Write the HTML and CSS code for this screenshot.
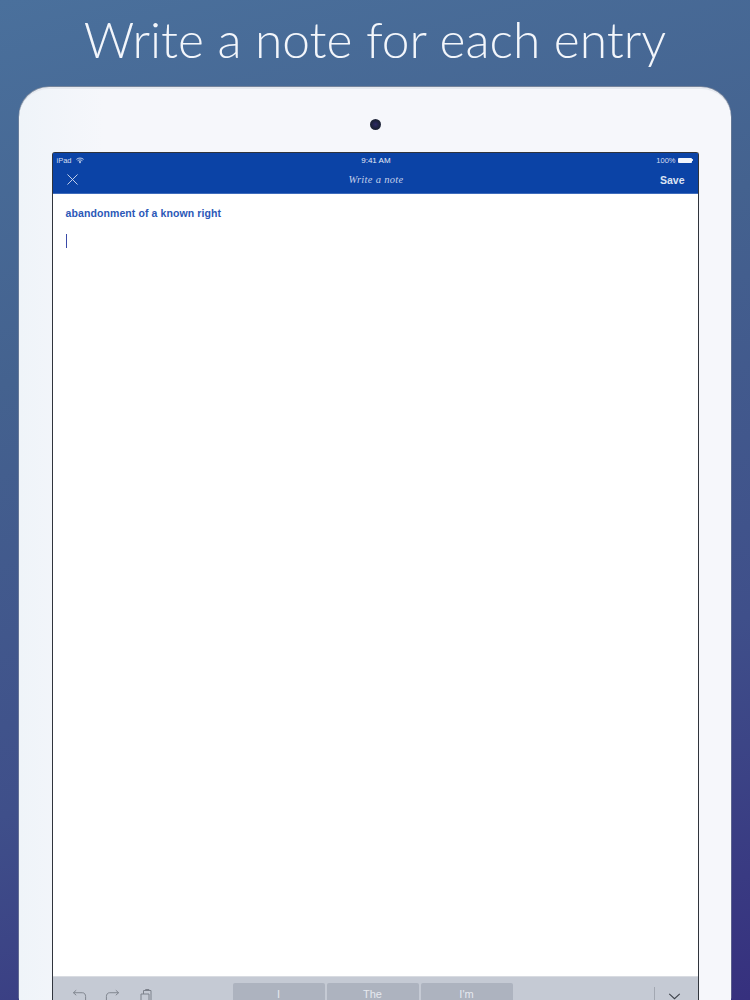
FILE: index.html
```html
<!DOCTYPE html>
<html lang="en">
<head>
<meta charset="utf-8">
<title>Write a note for each entry</title>
<link rel="stylesheet" href="styles.css">
</head>
<body>
<div class="page">
  <h1 class="headline">Write a note for each entry</h1>
  <div class="device">
    <div class="camera-row"><span class="camera"></span></div>
    <div class="screen">
      <div class="status">
        <div class="status-left">
          <span>iPad</span>
          <svg class="wifi" viewBox="0 0 10 8"><path d="M.5 2.600C3 .4 7 .4 9.500 2.600M2 4.300C3.800 2.900 6.200 2.900 8 4.300" fill="none" stroke="#d5def0" stroke-width="1.100"/><path d="M3.400 5.600C4.400 4.900 5.600 4.900 6.600 5.600L5 7.600Z" fill="#d5def0"/></svg>
        </div>
        <div class="status-time">9:41 AM</div>
        <div class="status-right">
          <span>100%</span>
          <span class="battery"></span>
          <span class="battery-nub"></span>
        </div>
      </div>
      <div class="nav">
        <svg class="close" viewBox="0 0 12 12"><path d="M.5.5l11 11M11.500.5l-11 11" stroke="#d3dcf0" stroke-width="1" fill="none"/></svg>
        <div class="nav-title">Write a note</div>
        <div class="nav-save">Save</div>
      </div>
      <div class="editor">
        <div class="term">abandonment of a known right</div>
        <div class="caret"></div>
      </div>
      <div class="kb-bar">
        <div class="kb-tools">
          <svg class="tool" viewBox="0 0 16 14"><path d="M1.500 3.500H11c2.500 0 3.500 2 3.500 4v4M4.500 .8 1.500 3.500 4.500 6.200" fill="none" stroke="#7d828c" stroke-width="1"/></svg>
          <svg class="tool" viewBox="0 0 16 14"><path d="M14.500 3.500H5c-2.500 0-3.500 2-3.500 4v4M11.500 .8l3 2.700-3 2.700" fill="none" stroke="#7d828c" stroke-width="1"/></svg>
          <svg class="tool paste" viewBox="0 0 14 14"><path d="M1 5h8v9H1zM3.500 5V1.500h7.500V14H9M5.500 1.500V.5h3.500v1" fill="none" stroke="#7d828c" stroke-width="1"/></svg>
        </div>
        <div class="suggestions">
          <div class="suggestion">I</div>
          <div class="suggestion">The</div>
          <div class="suggestion">I'm</div>
        </div>
        <div class="kb-hide">
          <svg class="chevron" viewBox="0 0 14 8"><path d="M1 1l6 5.500L13 1" fill="none" stroke="#3c4048" stroke-width="1.200"/></svg>
        </div>
      </div>
    </div>
  </div>
</div>
</body>
</html>
```
FILE: styles.css
```css
* { box-sizing: border-box; }
html, body { margin: 0; height: 1000px; overflow: hidden; }
.page {
  width: 750px;
  height: 1000px;
  overflow: hidden;
  background: linear-gradient(165deg, #4a709c 0%, #44628f 32%, #3f4f8a 68%, #36307e 100%);
  font-family: "Liberation Sans", Arial, sans-serif;
}
.headline {
  margin: 0;
  height: 87px;
  padding-top: 6px;
  text-align: center;
  font-family: Lato, sans-serif;
  font-weight: 300;
  font-size: 49.700px;
  line-height: 66px;
  color: #f3f6fb;
  white-space: nowrap;
}
.device {
  width: 712px;
  height: 913px;
  margin-left: 19px;
  padding: 0 0 0 33px;
  background: linear-gradient(90deg, #eff4f9 0%, #f6f7fb 12%, #f6f7fb 100%);
  border-radius: 30px 30px 0 0;
  border-top: 2px solid #e6e9ef;
  box-shadow: -1px -1px 0 -0.500px #87909f, 1px -1px 0 -0.500px #7e8799;
}
.camera-row {
  width: 646.500px;
  height: 63px;
  display: flex;
  justify-content: center;
  align-items: flex-start;
  padding-top: 30px;
}
.camera {
  width: 11px;
  height: 11px;
  border-radius: 50%;
  background: radial-gradient(circle, #2d2a66 0%, #1c2238 55%, #2a2e3c 100%);
}
.screen {
  width: 646.500px;
  height: 848px;
  background: #fff;
  border: 1.500px solid #30343c;
  border-bottom: 0;
  border-radius: 3px 3px 0 0;
  display: flex;
  flex-direction: column;
}
.status {
  height: 15px;
  margin-top: -0.500px;
  background: #0b43a6;
  color: #d5def0;
  font-size: 7.500px;
  display: flex;
  align-items: center;
  justify-content: space-between;
  padding: 0 5px 0 3.500px;
}
.status-left, .status-right { display: flex; align-items: center; gap: 4px; }
.status-right { gap: 1px; }
.wifi { width: 8px; height: 7px; }
.status-time { font-size: 8px; color: #e4eaf6; margin-left: 12px; }
.battery {
  width: 14px;
  height: 5px;
  background: #f2f5fb;
  border-radius: 1px;
  margin-left: 1px;
}
.battery-nub {
  width: 1px;
  height: 2px;
  margin-left: -1px;
  background: #d5def0;
}
.nav {
  height: 26px;
  background: #0b43a6;
  display: flex;
  align-items: center;
  justify-content: space-between;
  padding: 0 13px 1px 14px;
  border-bottom: 1px solid #3f6cbc;
}
.close { width: 11px; height: 11px; }
.nav-title {
  font-family: "Liberation Serif", serif;
  font-style: italic;
  font-size: 10.500px;
  letter-spacing: .3px;
  color: #c3d0ea;
  margin-left: 14px;
}
.nav-save { font-size: 10.500px; font-weight: 700; color: #dde4f3; }
.editor { flex: 1; padding: 13px 0 0 12.500px; }
.term {
  font-size: 10.500px;
  line-height: 13px;
  font-weight: 700;
  letter-spacing: .1px;
  color: #2b58b7;
}
.caret {
  width: 1.500px;
  height: 14px;
  margin-top: 14px;
  background: #3a4aa8;
}
.kb-bar {
  height: 24px;
  flex: none;
  background: #c5cad4;
  border-top: 1px solid #d8dbe1;
  display: flex;
  padding-top: 6px;
}
.kb-tools {
  width: 179.500px;
  display: flex;
  padding: 6px 0 0 18.500px;
  gap: 18px;
  flex: none;
}
.tool { width: 15px; height: 14px; flex: none; }
.paste { width: 14px; margin-left: 2px; }
.suggestions { display: flex; gap: 2px; flex: none; }
.suggestion {
  width: 92px;
  height: 30px;
  background: #adb3bf;
  border-radius: 2px 2px 0 0;
  color: #e6e9ef;
  font-size: 11px;
  text-align: center;
  padding-top: 5px;
}
.kb-hide {
  margin-left: auto;
  width: 44px;
  height: 24px;
  margin-top: 4px;
  border-left: 1px solid #a3a8b2;
  display: flex;
  justify-content: center;
  padding: 6px 4px 0 0;
}
.chevron { width: 13px; height: 7px; }
```
